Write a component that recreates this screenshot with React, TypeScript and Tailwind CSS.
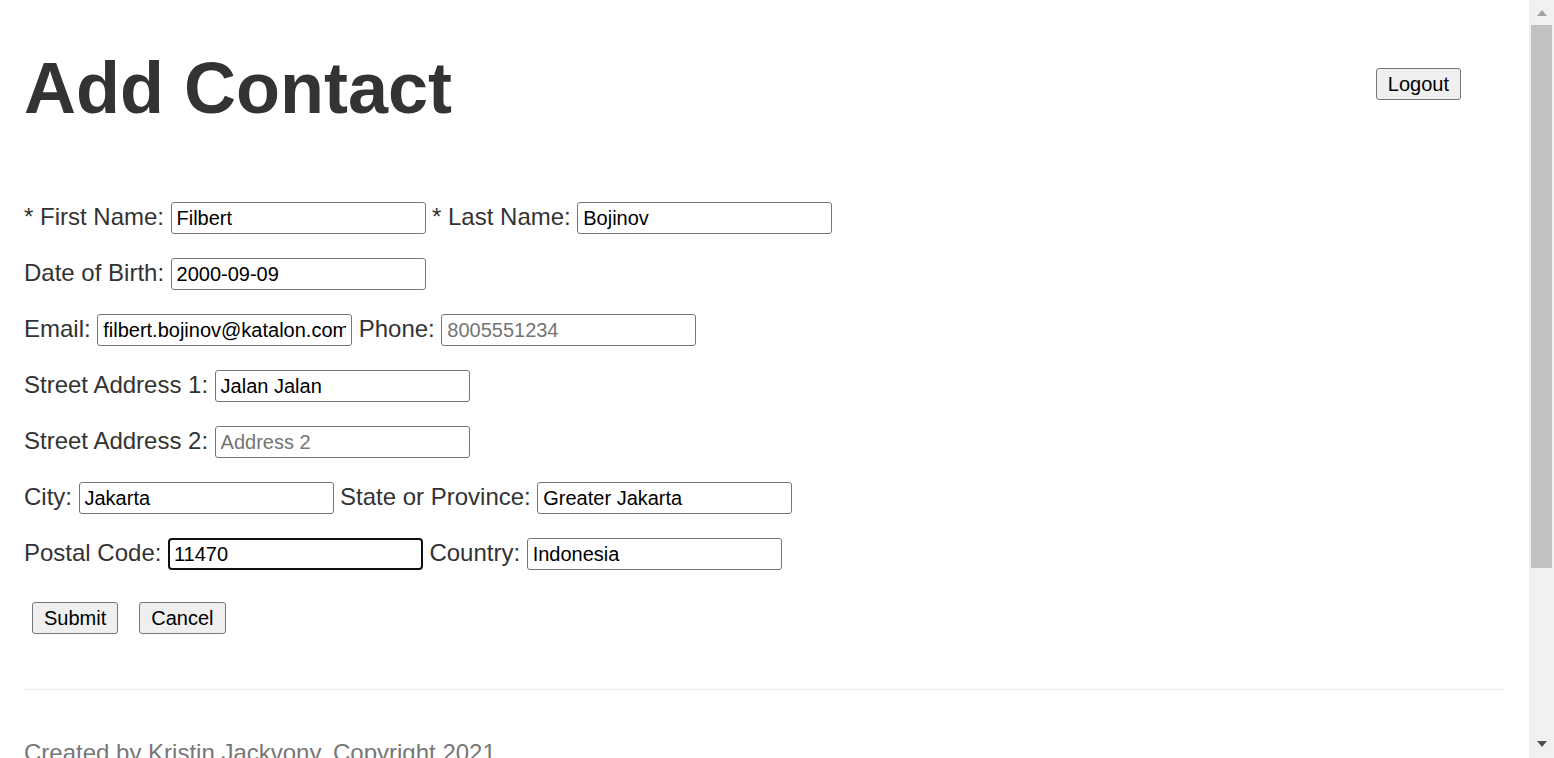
import React from 'react'

const font = { fontFamily: '"Liberation Sans", Arial, sans-serif' }

function Field({ label, value, placeholder, focused }: { label: string; value?: string; placeholder?: string; focused?: boolean }) {
  return (
    <>
      <span className="text-[24px] leading-[29px] text-[#333333]">{label}</span>
      <input
        readOnly
        defaultValue={value}
        placeholder={placeholder}
        className={`w-[255px] h-[32px] bg-white text-[20px] text-black placeholder:text-[#757575] outline-none ${
          focused
            ? 'border-2 border-[#101010] rounded-[4px] px-[4px]'
            : 'border border-[#767676] rounded-[3px] px-[5px]'
        }`}
        style={font}
      />
    </>
  )
}

function Row({ children }: { children: React.ReactNode }) {
  return <div className="flex items-start h-[32px] gap-[6.5px]">{children}</div>
}

function Btn({ children }: { children: React.ReactNode }) {
  return (
    <button className="h-[32px] px-[11px] bg-[#efefef] border border-[#767676] rounded-[3px] text-[20px] text-black leading-none">
      {children}
    </button>
  )
}

export default function App() {
  return (
    <div className="flex h-[758px] w-full overflow-hidden bg-white" style={font}>
      <div className="flex-1 flex flex-col pl-6 pr-[25px] pt-[52px]">
        {/* Header */}
        <div className="flex justify-between items-start">
          <h1 className="text-[72px] leading-[72px] font-bold text-[#333333]">Add Contact</h1>
          <div className="mt-[16px] mr-[43px]">
            <Btn>Logout</Btn>
          </div>
        </div>

        {/* Form */}
        <div className="mt-[78px] flex flex-col gap-[24px]">
          <Row>
            <Field label="* First Name:" value="Filbert" />
            <Field label="* Last Name:" value="Bojinov" />
          </Row>
          <Row>
            <Field label="Date of Birth:" value="2000-09-09" />
          </Row>
          <Row>
            <Field label="Email:" value="filbert.bojinov@katalon.com" />
            <Field label="Phone:" placeholder="8005551234" />
          </Row>
          <Row>
            <Field label="Street Address 1:" value="Jalan Jalan" />
          </Row>
          <Row>
            <Field label="Street Address 2:" placeholder="Address 2" />
          </Row>
          <Row>
            <Field label="City:" value="Jakarta" />
            <Field label="State or Province:" value="Greater Jakarta" />
          </Row>
          <Row>
            <Field label="Postal Code:" value="11470" focused />
            <Field label="Country:" value="Indonesia" />
          </Row>
        </div>

        <div className="mt-[32px] ml-[8px] flex gap-[21px]">
          <Btn>Submit</Btn>
          <Btn>Cancel</Btn>
        </div>

        <hr className="mt-[55px] border-0 border-t border-[#eeeeee]" />

        <footer className="mt-[47px] text-[24px] leading-[32px] text-[#777777] whitespace-nowrap">
          Created by Kristin Jackvony. Copyright 2021
        </footer>
      </div>

      {/* Scrollbar */}
      <div className="w-[25px] shrink-0 bg-[#f1f1f1] flex flex-col items-center">
        <div className="h-[25px] flex items-center justify-center">
          <svg width="10" height="6" viewBox="0 0 10 6"><path d="M0 6 L5 0 L10 6 Z" fill="#a3a3a3" /></svg>
        </div>
        <div className="w-[21px] h-[543px] bg-[#c1c1c1]" />
        <div className="flex-1" />
        <div className="h-[28px] flex items-center justify-center">
          <svg width="10" height="6" viewBox="0 0 10 6"><path d="M0 0 L10 0 L5 6 Z" fill="#505050" /></svg>
        </div>
      </div>
    </div>
  )
}
